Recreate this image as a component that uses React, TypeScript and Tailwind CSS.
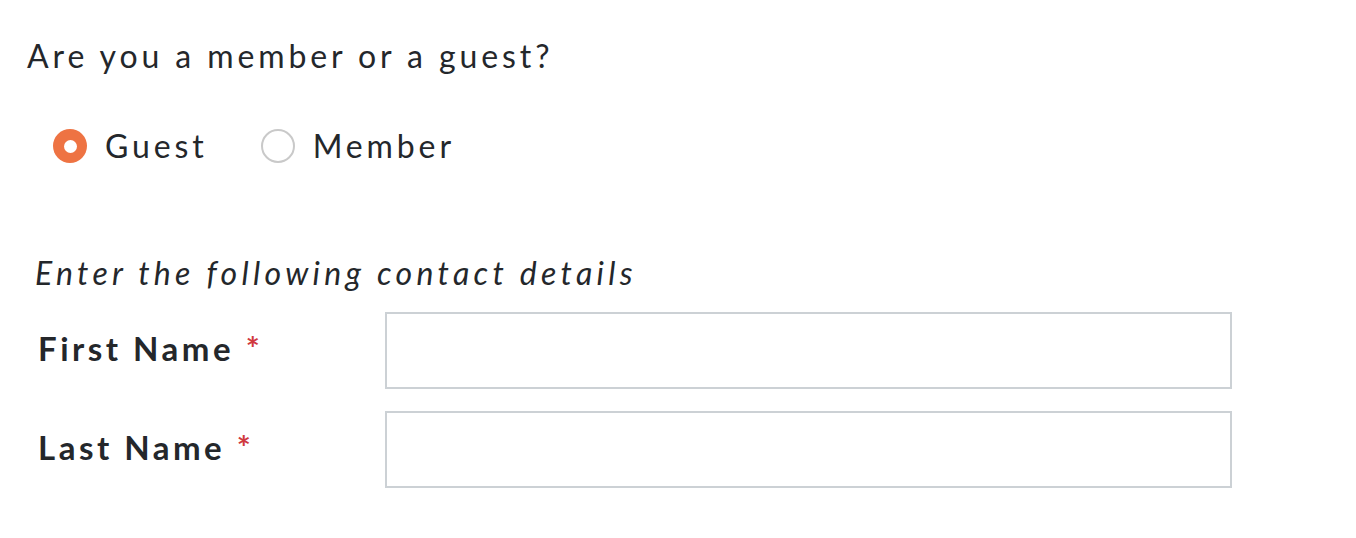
import React, { useState } from 'react';

const font = { fontFamily: 'Lato, "Open Sans", sans-serif' };

const Radio: React.FC<{ checked: boolean; label: string; onClick: () => void }> = ({ checked, label, onClick }) => (
    <button type="button" onClick={onClick} className="flex items-center gap-[18px]">
        {checked ? (
            <span className="w-[34px] h-[34px] rounded-full bg-[#ee7343] flex items-center justify-center">
                <span className="w-[13px] h-[13px] rounded-full bg-white"></span>
            </span>
        ) : (
            <span className="w-[34px] h-[34px] rounded-full border-2 border-[#c9c9c9] bg-white"></span>
        )}
        <span className="text-[32px] tracking-[3.9px] text-[#24272b] leading-[48px]">{label}</span>
    </button>
);

const Field: React.FC<{ label: string }> = ({ label }) => (
    <div className="flex items-center">
        <label className="w-[347px] text-[33px] font-bold tracking-[3.5px] text-[#24272b] -mt-[3px]">
            {label} <span className="text-[#d0393e]">*</span>
        </label>
        <input type="text" className="w-[847px] h-[77px] border-2 border-[#ccd1d5] bg-white outline-none px-4 text-2xl" />
    </div>
);

export default function App() {
    const [kind, setKind] = useState<'guest' | 'member'>('guest');

    return (
        <div className="w-[1356px] h-[538px] bg-white pl-[27px] pt-[36px]" style={font}>
            <h2 className="text-[32px] tracking-[3.9px] text-[#24272b] leading-[40px]">Are you a member or a guest?</h2>
            <div className="flex items-center gap-[53px] pl-[26px] mt-[46px]">
                <Radio checked={kind === 'guest'} label="Guest" onClick={() => setKind('guest')} />
                <Radio checked={kind === 'member'} label="Member" onClick={() => setKind('member')} />
            </div>
            <div className="pl-[8px] mt-[83px]">
                <p className="italic text-[32px] tracking-[4.3px] text-[#24272b] leading-[40px]">Enter the following contact details</p>
                <div className="flex flex-col gap-[22px] mt-[19px] pl-[3px]">
                    <Field label="First Name" />
                    <Field label="Last Name" />
                </div>
            </div>
        </div>
    );
}
